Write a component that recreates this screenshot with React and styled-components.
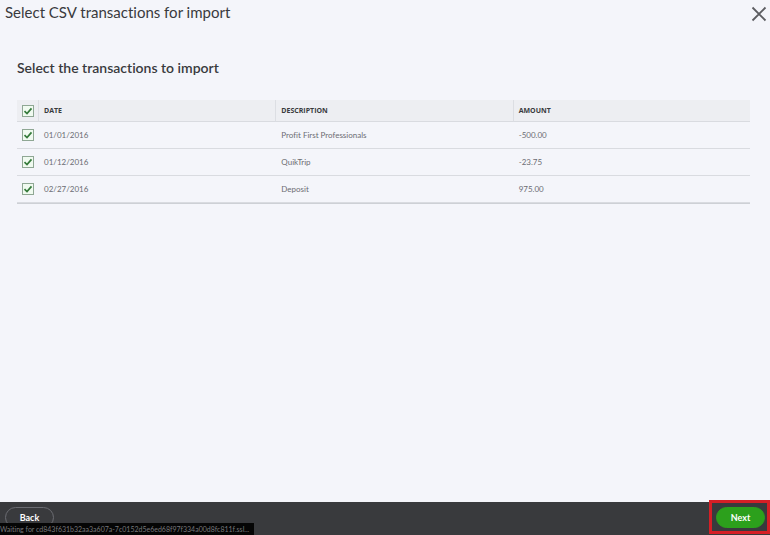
import { useState } from "react";
import styled, { createGlobalStyle } from "styled-components";

const GlobalStyle = createGlobalStyle`
  * {
    box-sizing: border-box;
  }
  body {
    margin: 0;
    background: #f4f5fa;
    color: #393a3d;
    font-family: Lato, "Open Sans", sans-serif;
    font-variant-ligatures: none;
  }
`;

const Page = styled.div`
  display: flex;
  flex-direction: column;
  min-height: 100vh;
`;

const Header = styled.header`
  display: flex;
  justify-content: space-between;
  align-items: flex-start;
  padding: 2px 3px 0 5px;
`;

const Title = styled.h1`
  margin: 0;
  font-size: 15px;
  font-weight: 400;
  line-height: 20px;
`;

const CloseButton = styled.button`
  display: flex;
  padding: 4px 0;
  border: 0;
  background: none;
  color: #5c5d61;
  cursor: pointer;
`;

const Main = styled.main`
  flex: 1;
  padding: 32px 20px 20px 17px;
`;

const Subtitle = styled.h2`
  margin: 0 0 22px;
  font-size: 14px;
  font-weight: 600;
  line-height: 20px;
`;

const Table = styled.table`
  width: 100%;
  table-layout: fixed;
  border-collapse: separate;
  border-spacing: 0;
  border-bottom: 1px solid #cdd0d5;
  font-size: 8px;
  line-height: 12px;
  text-align: left;
`;

const HeadCell = styled.th`
  width: ${(p) => (p.$check ? "21px" : "auto")};
  height: 22px;
  padding: ${(p) => (p.$check ? "0 0 0 5px" : "0 5px")};
  border-bottom: 1px solid #d9dbe0;
  border-left: ${(p) => (p.$divider ? "1px solid #dcdee3" : "0")};
  background: #edeef2;
  font-family: "Open Sans", sans-serif;
  font-size: 7px;
  font-weight: 700;
`;

const Cell = styled.td`
  height: 27px;
  padding: ${(p) => (p.$check ? "0 0 0 5px" : "0 6px")};
  border-bottom: 1px solid #d9dbe0;
  color: #6b6c72;
`;

const Checkbox = styled.input`
  appearance: none;
  display: block;
  width: 12px;
  height: 12px;
  margin: 0;
  border: 1px solid #8fa794;
  background: #f0faf0;
  cursor: pointer;

  &:checked {
    background: #f0faf0
      url("data:image/svg+xml,%3Csvg xmlns='http://www.w3.org/2000/svg' viewBox='0 0 10 10'%3E%3Cpath d='M1.5 5.2L4 7.6L8.5 2.4' fill='none' stroke='%23347a3a' stroke-width='1.7'/%3E%3C/svg%3E")
      center / 10px 10px no-repeat;
  }
`;

const Footer = styled.footer`
  position: relative;
  display: flex;
  justify-content: space-between;
  align-items: flex-start;
  height: 33px;
  padding: 5px 5px 0;
  background: #393a3d;
`;

const Button = styled.button`
  width: 49px;
  height: 21px;
  padding: 0;
  border: 1px solid ${(p) => (p.$primary ? "#2ca01c" : "#6b6c72")};
  border-radius: 11px;
  background: ${(p) => (p.$primary ? "#2ca01c" : "transparent")};
  color: #fff;
  font-family: inherit;
  font-size: 9px;
  font-weight: 700;
  cursor: pointer;
`;

const NextWrapper = styled.div`
  position: relative;
  display: flex;
`;

const Highlight = styled.div`
  position: absolute;
  inset: -7px -5px -6px -7px;
  border: 3px solid #d51f26;
  pointer-events: none;
`;

const StatusBar = styled.div`
  position: absolute;
  left: 0;
  bottom: 0;
  min-width: 254px;
  height: 12px;
  background: #050505;
  color: #77787b;
  font-size: 7px;
  line-height: 12px;
  white-space: nowrap;
`;

const transactions = [
  {
    id: 1,
    date: "01/01/2016",
    description: "Profit First Professionals",
    amount: "-500.00",
  },
  { id: 2, date: "01/12/2016", description: "QuikTrip", amount: "-23.75" },
  { id: 3, date: "02/27/2016", description: "Deposit", amount: "975.00" },
];

const CloseIcon = () => (
  <svg width="16" height="16" viewBox="0 0 16 16" aria-hidden="true">
    <path
      d="M1.5 1.5L14.5 14.5M14.5 1.5L1.5 14.5"
      stroke="currentColor"
      strokeWidth="1.8"
    />
  </svg>
);

const App = () => {
  const [selected, setSelected] = useState(transactions.map((t) => t.id));
  const allSelected = selected.length === transactions.length;

  const toggleAll = () =>
    setSelected(allSelected ? [] : transactions.map((t) => t.id));

  const toggle = (id) =>
    setSelected(
      selected.includes(id)
        ? selected.filter((s) => s !== id)
        : [...selected, id]
    );

  return (
    <Page>
      <GlobalStyle />
      <Header>
        <Title>Select CSV transactions for import</Title>
        <CloseButton type="button" aria-label="Close">
          <CloseIcon />
        </CloseButton>
      </Header>
      <Main>
        <Subtitle>Select the transactions to import</Subtitle>
        <Table>
          <thead>
            <tr>
              <HeadCell $check>
                <Checkbox
                  type="checkbox"
                  aria-label="Select all transactions"
                  checked={allSelected}
                  onChange={toggleAll}
                />
              </HeadCell>
              <HeadCell $divider>DATE</HeadCell>
              <HeadCell $divider>DESCRIPTION</HeadCell>
              <HeadCell $divider>AMOUNT</HeadCell>
            </tr>
          </thead>
          <tbody>
            {transactions.map((t) => (
              <tr key={t.id}>
                <Cell $check>
                  <Checkbox
                    type="checkbox"
                    aria-label={`Select ${t.description}`}
                    checked={selected.includes(t.id)}
                    onChange={() => toggle(t.id)}
                  />
                </Cell>
                <Cell>{t.date}</Cell>
                <Cell>{t.description}</Cell>
                <Cell>{t.amount}</Cell>
              </tr>
            ))}
          </tbody>
        </Table>
      </Main>
      <Footer>
        <Button type="button">Back</Button>
        <NextWrapper>
          <Button type="button" $primary>
            Next
          </Button>
          <Highlight />
        </NextWrapper>
        <StatusBar role="status">
          Waiting for cd843f631b32aa3a607a-7c0152d5e6ed68f97f334a00d8fc811f.ssl...
        </StatusBar>
      </Footer>
    </Page>
  );
};

export default App;
